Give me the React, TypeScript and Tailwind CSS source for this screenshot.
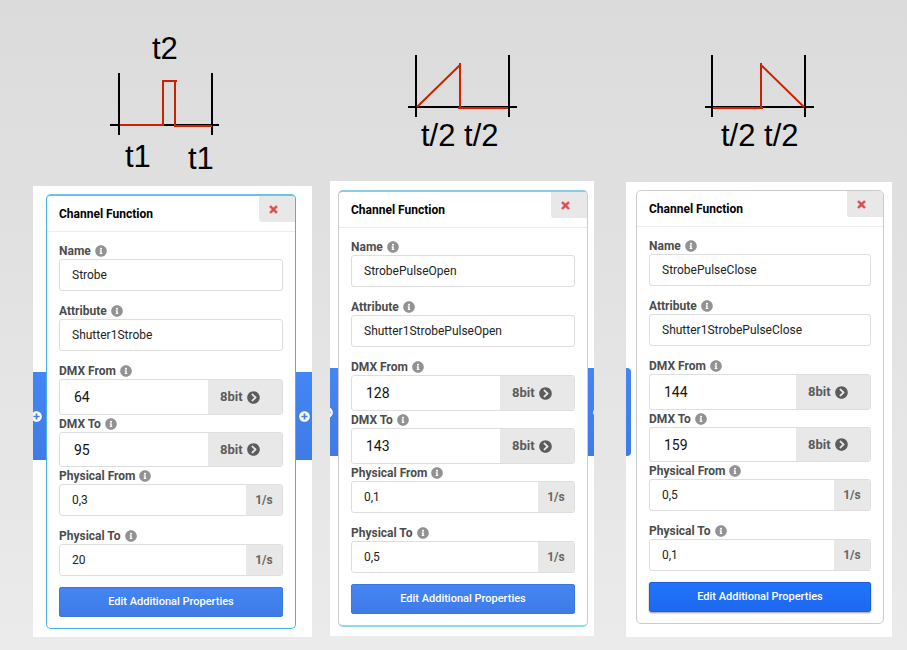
import React, { useId, useState } from "react";
import {
  FaChevronCircleRight,
  FaInfoCircle,
  FaPlusCircle,
  FaTimes,
} from "react-icons/fa";

function FieldLabel({ id, text }: { id: string; text: string }) {
  return (
    <label
      htmlFor={id}
      className="flex h-[17px] items-center gap-1 text-xs font-bold text-[#4c4c4c]"
    >
      {text}
      <FaInfoCircle className="size-3 text-[#929292]" />
    </label>
  );
}

function TextField({
  label,
  initial,
  unit,
}: {
  label: string;
  initial: string;
  unit?: string;
}) {
  const id = useId();
  const [value, setValue] = useState(initial);
  return (
    <div className="mb-[11px]">
      <FieldLabel id={id} text={label} />
      <div className="flex h-8 overflow-hidden rounded-[3px] border border-[#dedede] bg-white">
        <input
          id={id}
          value={value}
          onChange={(e) => setValue(e.target.value)}
          className="min-w-0 flex-1 px-3 text-xs text-[#222] outline-none"
        />
        {unit && (
          <span className="flex w-9 items-center justify-center bg-[#e8e8e8] text-xs font-bold text-[#666]">
            {unit}
          </span>
        )}
      </div>
    </div>
  );
}

function DmxField({
  label,
  initial,
  height,
}: {
  label: string;
  initial: string;
  height: string;
}) {
  const id = useId();
  const [value, setValue] = useState(initial);
  return (
    <div>
      <FieldLabel id={id} text={label} />
      <div
        className={`flex overflow-hidden rounded-[3px] border border-[#dedede] bg-white ${height}`}
      >
        <input
          id={id}
          value={value}
          onChange={(e) => setValue(e.target.value)}
          className="min-w-0 flex-1 px-3.5 text-sm text-[#111] outline-none"
        />
        <button
          type="button"
          className="flex w-[74px] items-center gap-1 bg-[#e8e8e8] pl-3 text-[13px] font-bold text-[#5c5c5c]"
        >
          8bit
          <FaChevronCircleRight className="size-[13px]" />
        </button>
      </div>
    </div>
  );
}

type CardProps = {
  name: string;
  attribute: string;
  dmxFrom: string;
  dmxTo: string;
  physicalFrom: string;
  physicalTo: string;
  border: string;
  button: string;
  dmxToHeight: string;
};

function ChannelCard(p: CardProps) {
  return (
    <section
      className={`min-w-0 flex-1 overflow-hidden rounded-[5px] border bg-white pb-[11px] ${p.border}`}
    >
      <header className="flex h-9 items-start justify-between border-b border-[#ececec] pl-3">
        <h2 className="text-xs leading-9 font-bold text-black">
          Channel Function
        </h2>
        <button
          type="button"
          aria-label="Close"
          className="flex h-[26px] w-9 items-center rounded-bl-[3px] bg-[#e8e8e8] pl-[9px] text-[#df4c4c]"
        >
          <FaTimes className="size-[11px]" stroke="currentColor" strokeWidth="30" />
        </button>
      </header>
      <div className="px-3 pt-2.5">
        <TextField label="Name" initial={p.name} />
        <TextField label="Attribute" initial={p.attribute} />
        <DmxField label="DMX From" initial={p.dmxFrom} height="h-9" />
        <DmxField label="DMX To" initial={p.dmxTo} height={p.dmxToHeight} />
        <TextField label="Physical From" initial={p.physicalFrom} unit="1/s" />
        <TextField label="Physical To" initial={p.physicalTo} unit="1/s" />
        <button
          type="button"
          className={`h-[30px] w-full rounded-[2px] border bg-linear-to-b text-[11px] font-medium text-white ${p.button}`}
        >
          Edit Additional Properties
        </button>
      </div>
    </section>
  );
}

function AddBar({ place, icon }: { place: string; icon?: string }) {
  return (
    <button
      type="button"
      aria-label="Add channel function"
      className={`mt-[178px] flex h-[88px] shrink-0 items-center overflow-hidden bg-linear-to-b from-[#4486f4] to-[#3f7be6] text-white ${place}`}
    >
      {icon && <FaPlusCircle className={`size-[11px] shrink-0 ${icon}`} />}
    </button>
  );
}

const axis = { stroke: "#000", strokeWidth: 2, fill: "none" };
const wave = { stroke: "#cc2200", strokeWidth: 2, fill: "none" };
const caption =
  "fill-black font-['Liberation_Sans',Arial,sans-serif] text-[31px]";

function StrobeWave() {
  return (
    <svg width="130" height="160" className="ml-[72px]" role="img" aria-label="Strobe">
      <text x="47" y="39" className={caption}>t2</text>
      <path d="M14 53V115M107 53V115M5 105H114" {...axis} />
      <path d="M15 105H58M58 106V61H72M70 61V106H107" {...wave} />
      <text x="20" y="147" className={caption}>t1</text>
      <text x="83" y="149" className={caption}>t1</text>
    </svg>
  );
}

function OpenWave() {
  return (
    <svg width="130" height="120" className="ml-[73px]" role="img" aria-label="Pulse open">
      <path d="M13 15V77M106 15V77M5 67H114" {...axis} />
      <path d="M14 67L57 25M57 23V68M55 68H105" {...wave} />
      <text x="18" y="106" className={caption}>t/2 t/2</text>
    </svg>
  );
}

function CloseWave() {
  return (
    <svg width="130" height="120" className="ml-[73px]" role="img" aria-label="Pulse close">
      <path d="M13 15V77M106 15V77M6 67H115" {...axis} />
      <path d="M14 68H64M62 68V23M62 25L105 67" {...wave} />
      <text x="22" y="106" className={caption}>t/2 t/2</text>
    </svg>
  );
}

export default function App() {
  const blueButton = "border-[#3b77df] from-[#4486f4] to-[#3f7be6]";
  return (
    <main className="flex min-h-screen items-start bg-linear-to-b from-[#dbdbdb] to-[#ebebeb] pr-[15px] pb-3 pl-[33px] font-[Roboto,sans-serif]">
      <div className="min-w-0 flex-[279]">
        <div className="h-[186px] pt-5">
          <StrobeWave />
        </div>
        <div className="flex items-start bg-white py-2">
          <AddBar place="w-[13px]" icon="-ml-0.5" />
          <ChannelCard
            name="Strobe"
            attribute="Shutter1Strobe"
            dmxFrom="64"
            dmxTo="95"
            physicalFrom="0,3"
            physicalTo="20"
            border="border-t-2 border-[#45b3e0] border-t-[#6cc3e6]"
            button={blueButton}
            dmxToHeight="h-[35px]"
          />
          <AddBar place="w-4" icon="mx-auto" />
        </div>
      </div>

      <div className="ml-[18px] min-w-0 flex-[264]">
        <div className="h-[181px] pt-10">
          <OpenWave />
        </div>
        <div className="flex items-start bg-white py-[9px]">
          <AddBar place="w-2" icon="-ml-2" />
          <ChannelCard
            name="StrobePulseOpen"
            attribute="Shutter1StrobePulseOpen"
            dmxFrom="128"
            dmxTo="143"
            physicalFrom="0,1"
            physicalTo="0,5"
            border="border-y-2 border-x-[#cccccc] border-t-[#8ecbe6] border-b-[#8dd8f2]"
            button={blueButton}
            dmxToHeight="h-9"
          />
          <AddBar place="w-1.5" icon="ml-[5px]" />
        </div>
      </div>

      <div className="ml-8 min-w-0 flex-[266]">
        <div className="h-[182px] pt-10">
          <CloseWave />
        </div>
        <div className="flex items-start bg-white pt-2 pr-2 pb-[13px]">
          <AddBar place="mr-[5px] w-[5px] rounded-r-sm" />
          <ChannelCard
            name="StrobePulseClose"
            attribute="Shutter1StrobePulseClose"
            dmxFrom="144"
            dmxTo="159"
            physicalFrom="0,5"
            physicalTo="0,1"
            border="border-[#cbcbcb]"
            button="border-[#1d5fd6] from-[#2173fb] to-[#1d69f0] shadow-[0_1px_2px_rgba(0,0,0,0.4)]"
            dmxToHeight="h-[35px]"
          />
        </div>
      </div>
    </main>
  );
}
